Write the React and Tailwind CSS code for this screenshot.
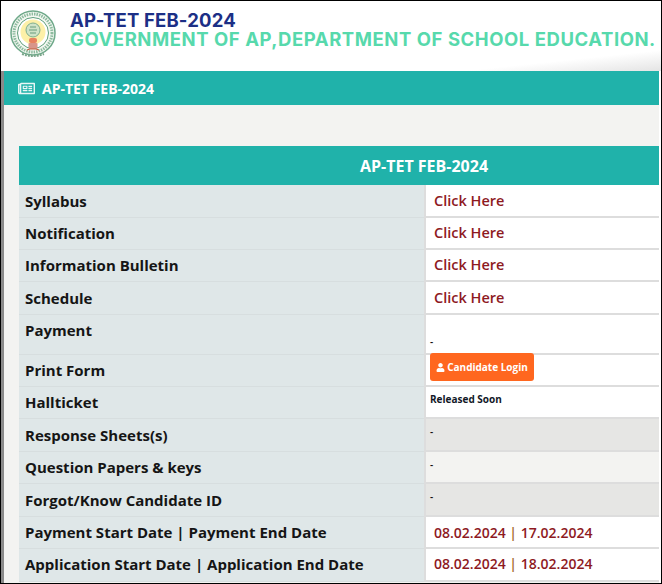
import React from "react";
import { FaRegNewspaper, FaUser } from "react-icons/fa";

function Emblem() {
    return (
        <svg width="48" height="50" viewBox="0 0 48 50" className="shrink-0">
            <circle cx="24" cy="24" r="22" fill="#f4f8f2" stroke="#6fa98a" strokeWidth="1.5" />
            <circle cx="24" cy="24" r="19" fill="none" stroke="#8dbb9f" strokeWidth="3" strokeDasharray="1.5 1" />
            <circle cx="24" cy="24" r="15.5" fill="#fff" stroke="#5f9f7c" strokeWidth="1" />
            <circle cx="24" cy="23" r="12.5" fill="#fdf0a8" />
            <circle cx="24" cy="21" r="7" fill="#cfe3c8" stroke="#7fae8e" strokeWidth="1" />
            <path d="M21 18h6M20 21h8M21 24h6" stroke="#6a9c7c" strokeWidth="1.2" />
            <rect x="20" y="29" width="8" height="5" rx="2" fill="#e8825f" />
            <rect x="19.5" y="34" width="9" height="6" rx="1" fill="#d8968a" />
            <path d="M18 41l3-1h6l3 1" stroke="#c0603f" strokeWidth="1.2" fill="none" />
            <path d="M13 45q11 4 22 0" stroke="#7aa58a" strokeWidth="2" fill="none" strokeDasharray="2 1" />
        </svg>
    );
}

const rows = [
    { label: "Syllabus", h: "h-[33px]", link: true },
    { label: "Notification", h: "h-[32px]", link: true },
    { label: "Information Bulletin", h: "h-[32px]", link: true },
    { label: "Schedule", h: "h-[33px]", link: true },
    { label: "Payment", h: "h-[40px]", dash: "bottom", labelTop: true },
    { label: "Print Form", h: "h-[32px]", login: true },
    { label: "Hallticket", h: "h-[32px]", soon: true },
    { label: "Response Sheets(s)", h: "h-[33px]", dash: "top", bg: "bg-[#e6e6e4]" },
    { label: "Question Papers & keys", h: "h-[32px]", dash: "top", bg: "bg-[#f3f3f1]" },
    { label: "Forgot/Know Candidate ID", h: "h-[33px]", dash: "top", bg: "bg-[#e6e6e4]" },
    { label: "Payment Start Date | Payment End Date", h: "h-[32px]", dates: ["08.02.2024", "17.02.2024"] },
    { label: "Application Start Date | Application End Date", h: "h-[33px]", pad: "pb-[2px]", dates: ["08.02.2024", "18.02.2024"] },
];

function Cell({ row }) {
    if (row.link) {
        return <a className="pl-[8px] text-[14.5px] font-semibold text-[#8e1a1f]">Click Here</a>;
    }
    if (row.login) {
        return (
            <div className="-mt-[6px] ml-[4px] flex h-[28px] w-[104px] items-center justify-center gap-[2px] rounded-[3px] bg-[#ff671f] text-[10px] font-bold text-white">
                <FaUser className="text-[9px]" />
                <span>Candidate Login</span>
            </div>
        );
    }
    if (row.soon) {
        return <span className="-mt-[5px] pl-[4px] text-[10px] font-bold text-[#111827]">Released Soon</span>;
    }
    if (row.dates) {
        return (
            <span className="pl-[8px] text-[14px] font-semibold text-[#8e1a1f]">
                {row.dates[0]} <span className="text-[#a5652a]">|</span> {row.dates[1]}
            </span>
        );
    }
    return (
        <span className={`pl-[4px] text-[10px] font-semibold text-[#111] ${row.dash === "bottom" ? "mt-[16px]" : "-mt-[4px]"}`}>-</span>
    );
}

export default function App() {
    return (
        <div className="h-[584px] w-[662px] overflow-hidden border border-black bg-white font-['Open_Sans',sans-serif]">
            <div className="flex h-[70px] items-start gap-[13px] bg-linear-to-br from-white from-85% to-[#e4e4e4] pl-[8px] pt-[8px]">
                <Emblem />
                <div className="font-['Inter',sans-serif] font-bold">
                    <div className="mt-[2px] text-[18.5px] leading-[19px] tracking-[0.15px] text-[#1c2f86]">AP-TET FEB-2024</div>
                    <div className="whitespace-nowrap text-[18.5px] leading-[19px] tracking-[0.55px] text-[#57d9ac]">
                        GOVERNMENT OF AP,DEPARTMENT OF SCHOOL EDUCATION.
                    </div>
                </div>
            </div>
            <div className="mr-[2px] h-[512px] border-l-[3px] border-[#8a8a8a] bg-[#f3f3f1]">
                <div className="flex h-[34px] items-center gap-[7px] bg-[#20b2aa] pl-[14px] text-[14px] font-bold text-white">
                    <FaRegNewspaper className="text-[17px] opacity-90" />
                    <span>AP-TET FEB-2024</span>
                </div>
                <div className="ml-[15px] mt-[41px]">
                    <div className="flex h-[39px] items-center justify-center bg-[#20b2aa] pl-[170px] text-[16px] font-bold text-white">
                        AP-TET FEB-2024
                    </div>
                    {rows.map((row) => (
                        <div key={row.label} className={`grid grid-cols-[405px_1fr] ${row.h}`}>
                            <div className={`flex items-center border-b border-[#d7dedf] bg-[#dfe7e8] pl-[6px] text-[15px] font-bold whitespace-nowrap text-[#151515] ${row.pad || ""}`}>
                                <span className={row.labelTop ? "-mt-[8px]" : ""}>{row.label}</span>
                            </div>
                            <div className={`flex items-center border-b-2 border-l-2 border-[#dddddd] ${row.bg || "bg-white"} ${row.pad || ""}`}>
                                <Cell row={row} />
                            </div>
                        </div>
                    ))}
                </div>
            </div>
        </div>
    );
}
